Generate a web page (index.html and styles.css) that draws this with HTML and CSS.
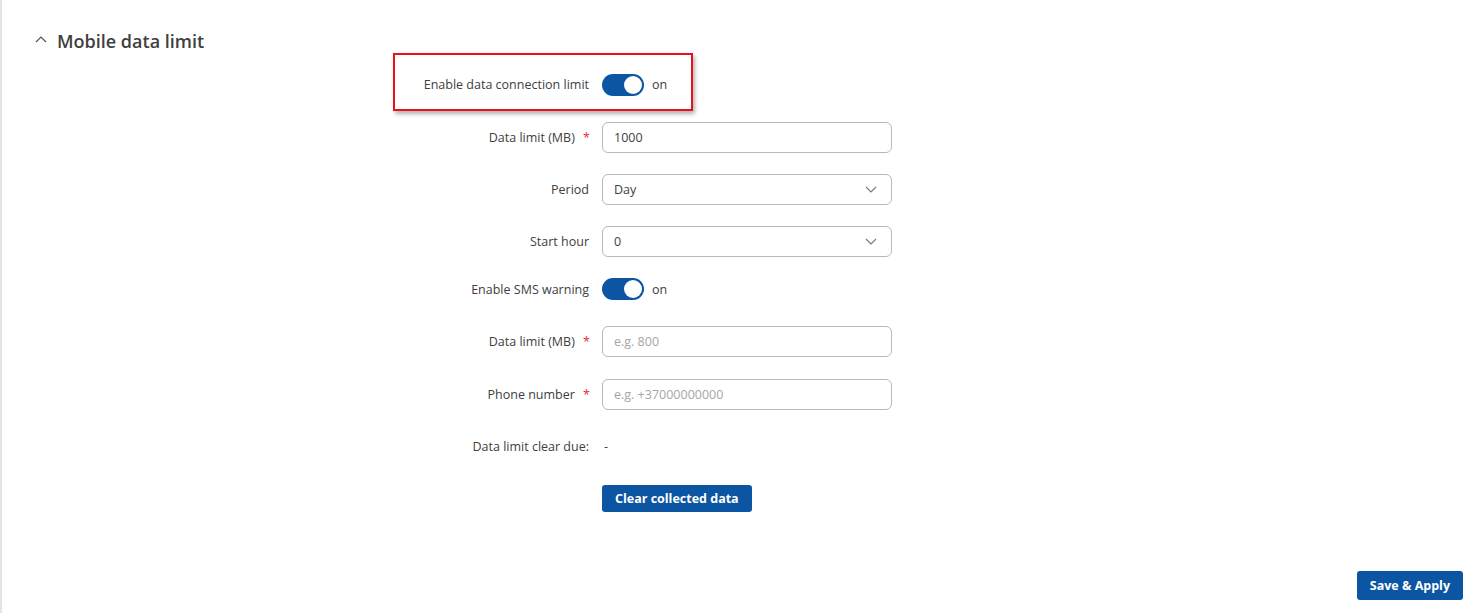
FILE: index.html
```html
<!DOCTYPE html>
<html lang="en">
<head>
    <meta charset="UTF-8">
    <title>Mobile data limit</title>
    <link rel="stylesheet" href="styles.css">
</head>
<body>
    <div class="page">
        <div class="section-title">
            <svg class="caret" width="12" height="8" viewBox="0 0 12 8"><path d="M1 7 L6 2 L11 7" fill="none" stroke="#555" stroke-width="1.2"/></svg>
            <h2>Mobile data limit</h2>
        </div>

        <div class="form">
            <div class="highlight"></div>

            <div class="row row-tall">
                <label class="label">Enable data connection limit</label>
                <div class="field">
                    <span class="switch"><span class="knob"></span></span>
                    <span class="switch-text">on</span>
                </div>
            </div>

            <div class="row">
                <label class="label">Data limit (MB) <span class="req">*</span></label>
                <div class="field"><input class="input" type="text" value="1000"></div>
            </div>

            <div class="row">
                <label class="label">Period</label>
                <div class="field">
                    <div class="select">Day
                        <svg class="chev" width="12" height="7" viewBox="0 0 12 7"><path d="M1 1 L6 6 L11 1" fill="none" stroke="#777" stroke-width="1.1"/></svg>
                    </div>
                </div>
            </div>

            <div class="row">
                <label class="label">Start hour</label>
                <div class="field">
                    <div class="select">0
                        <svg class="chev" width="12" height="7" viewBox="0 0 12 7"><path d="M1 1 L6 6 L11 1" fill="none" stroke="#777" stroke-width="1.1"/></svg>
                    </div>
                </div>
            </div>

            <div class="row row-short">
                <label class="label">Enable SMS warning</label>
                <div class="field">
                    <span class="switch"><span class="knob"></span></span>
                    <span class="switch-text">on</span>
                </div>
            </div>

            <div class="row row-tall">
                <label class="label">Data limit (MB) <span class="req">*</span></label>
                <div class="field"><input class="input" type="text" placeholder="e.g. 800"></div>
            </div>

            <div class="row">
                <label class="label">Phone number <span class="req">*</span></label>
                <div class="field"><input class="input" type="text" placeholder="e.g. +37000000000"></div>
            </div>

            <div class="row">
                <label class="label">Data limit clear due:</label>
                <div class="field"><span class="value">-</span></div>
            </div>

            <div class="row">
                <span class="label"></span>
                <div class="field"><button class="btn">Clear collected data</button></div>
            </div>
        </div>

        <div class="footer">
            <button class="btn btn-save">Save &amp; Apply</button>
        </div>
    </div>
</body>
</html>
```

FILE: styles.css
```css
body {
    margin: 0;
    font-family: 'Open Sans', sans-serif;
    color: #404040;
    background-color: #fff;
}

.page {
    position: relative;
    height: 613px;
    box-sizing: border-box;
    border-left: 2px solid #e4e4e4;
}

.section-title {
    display: flex;
    align-items: center;
    padding: 28px 0 0 33px;
    height: 26px;
}

.section-title .caret {
    margin-right: 10px;
    margin-top: -4px;
}

.section-title h2 {
    margin: 0;
    font-size: 18px;
    font-weight: 600;
    color: #404040;
}

.form {
    position: relative;
    display: flex;
    flex-direction: column;
    margin-top: 4px;
}

.highlight {
    position: absolute;
    left: 391px;
    top: -5px;
    width: 296px;
    height: 54px;
    border: 2px solid #e8101a;
    box-shadow: 2px 3px 4px rgba(0, 0, 0, 0.3);
}

.row {
    display: flex;
    align-items: center;
    height: 52px;
}

.row-tall {
    height: 53px;
}

.row-short {
    margin-top: -4px;
}

.label {
    width: 600px;
    flex-shrink: 0;
    text-align: right;
    font-size: 12.5px;
    color: #404040;
    padding-right: 13px;
    box-sizing: border-box;
}

.label .req {
    color: #e03030;
    margin-left: 5px;
    margin-right: -1px;
}

.field {
    display: flex;
    align-items: center;
}

.switch {
    position: relative;
    display: inline-block;
    width: 42px;
    height: 22px;
    border-radius: 11px;
    background-color: #0c55a2;
}

.switch .knob {
    position: absolute;
    right: 2px;
    top: 2px;
    width: 18px;
    height: 18px;
    border-radius: 50%;
    background-color: #fff;
}

.switch-text {
    margin-left: 8px;
    font-size: 12.5px;
}

.input, .select {
    width: 290px;
    height: 31px;
    box-sizing: border-box;
    border: 1px solid #b9b9bd;
    border-radius: 6px;
    padding: 0 11px;
    font-family: 'Open Sans', sans-serif;
    font-size: 12.5px;
    color: #404040;
    outline: none;
}

.input::placeholder {
    color: #a6a6a6;
}

.select {
    display: flex;
    align-items: center;
    justify-content: space-between;
    padding-right: 14px;
}

.value {
    font-size: 12.5px;
    padding-left: 2px;
}

.btn {
    background-color: #0c55a2;
    color: #fff;
    border: none;
    border-radius: 3px;
    font-family: 'Open Sans', sans-serif;
    font-size: 12.5px;
    font-weight: 700;
    height: 27px;
    padding: 0 13px;
    cursor: pointer;
}

.footer {
    position: absolute;
    right: 16px;
    bottom: 13px;
}

.btn-save {
    height: 29px;
    padding: 0 13px;
}
```
